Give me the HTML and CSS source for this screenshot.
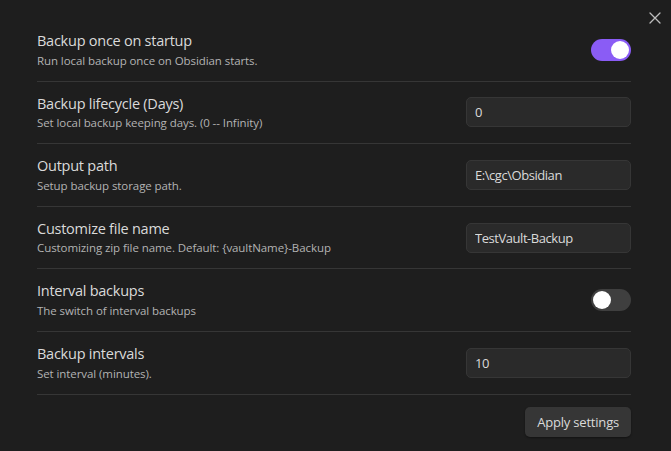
FILE: index.html
```html
<!DOCTYPE html>
<html>
<head>
<meta charset="utf-8">
<link rel="stylesheet" href="styles.css">
</head>
<body>
<div class="modal">
  <button class="close" aria-label="Close">
    <svg width="12" height="12" viewBox="0 0 12 12"><path d="M1 1L11 11M11 1L1 11" stroke="#bdbdbd" stroke-width="1.3" stroke-linecap="round"/></svg>
  </button>
  <div class="settings">
    <div class="item">
      <div class="info">
        <div class="name">Backup once on startup</div>
        <div class="desc">Run local backup once on Obsidian starts.</div>
      </div>
      <div class="toggle on"><span class="knob"></span></div>
    </div>
    <div class="item">
      <div class="info">
        <div class="name">Backup lifecycle (Days)</div>
        <div class="desc">Set local backup keeping days. (0 -- Infinity)</div>
      </div>
      <input class="field" type="text" value="0">
    </div>
    <div class="item">
      <div class="info">
        <div class="name">Output path</div>
        <div class="desc">Setup backup storage path.</div>
      </div>
      <input class="field" type="text" value="E:\cgc\Obsidian">
    </div>
    <div class="item">
      <div class="info">
        <div class="name">Customize file name</div>
        <div class="desc">Customizing zip file name. Default: {vaultName}-Backup</div>
      </div>
      <input class="field" type="text" value="TestVault-Backup">
    </div>
    <div class="item">
      <div class="info">
        <div class="name">Interval backups</div>
        <div class="desc">The switch of interval backups</div>
      </div>
      <div class="toggle"><span class="knob"></span></div>
    </div>
    <div class="item">
      <div class="info">
        <div class="name">Backup intervals</div>
        <div class="desc">Set interval (minutes).</div>
      </div>
      <input class="field" type="text" value="10">
    </div>
    <div class="item actions">
      <button class="btn">Apply settings</button>
    </div>
  </div>
</div>
</body>
</html>
```
FILE: styles.css
```css
html, body {
  margin: 0;
  padding: 0;
  background: #1e1e1e;
  height: 100%;
}
body {
  font-family: "Open Sans", "Noto Sans", sans-serif;
  color: #dadada;
  overflow: hidden;
}
.modal {
  position: relative;
  height: 100%;
  box-sizing: border-box;
  padding: 19px 40px 0 37px;
}
.close {
  position: absolute;
  top: 12px;
  right: 10px;
  width: 12px;
  height: 12px;
  padding: 0;
  border: 0;
  background: none;
  display: flex;
}
.settings {
  display: flex;
  flex-direction: column;
}
.item {
  display: flex;
  align-items: center;
  justify-content: space-between;
  padding: 12px 0;
  border-top: 1px solid #363636;
  height: 37.6px;
}
.item:first-child {
  border-top: 0;
}
.info {
  display: flex;
  flex-direction: column;
  gap: 1.5px;
}
.name {
  font-size: 14.5px;
  line-height: 19px;
  color: #dadada;
  letter-spacing: -0.25px;
}
.desc {
  font-size: 11.5px;
  line-height: 17px;
  color: #b3b3b3;
  letter-spacing: -0.08px;
}
.toggle {
  width: 40px;
  height: 22px;
  border-radius: 11px;
  background: #3f3f3f;
  display: flex;
  align-items: center;
  padding: 0 2px;
  box-sizing: border-box;
}
.toggle.on {
  background: #8a5cf5;
  justify-content: flex-end;
}
.knob {
  width: 18px;
  height: 18px;
  border-radius: 50%;
  background: #ffffff;
}
.field {
  width: 165px;
  height: 30px;
  box-sizing: border-box;
  background: #2a2a2a;
  border: 1px solid #363636;
  border-radius: 5px;
  color: #dadada;
  font-family: "Open Sans", "Noto Sans", sans-serif;
  font-size: 13px;
  letter-spacing: -0.45px;
  padding: 0 8px;
  outline: none;
}
.actions {
  justify-content: flex-end;
  height: 30px;
}
.btn {
  height: 30px;
  padding: 0 12px;
  background: #363636;
  color: #dadada;
  border: 0;
  border-radius: 5px;
  font-family: "Open Sans", "Noto Sans", sans-serif;
  font-size: 13px;
  letter-spacing: -0.2px;
  box-shadow: 0 1px 2px rgba(0,0,0,0.4);
}
```
